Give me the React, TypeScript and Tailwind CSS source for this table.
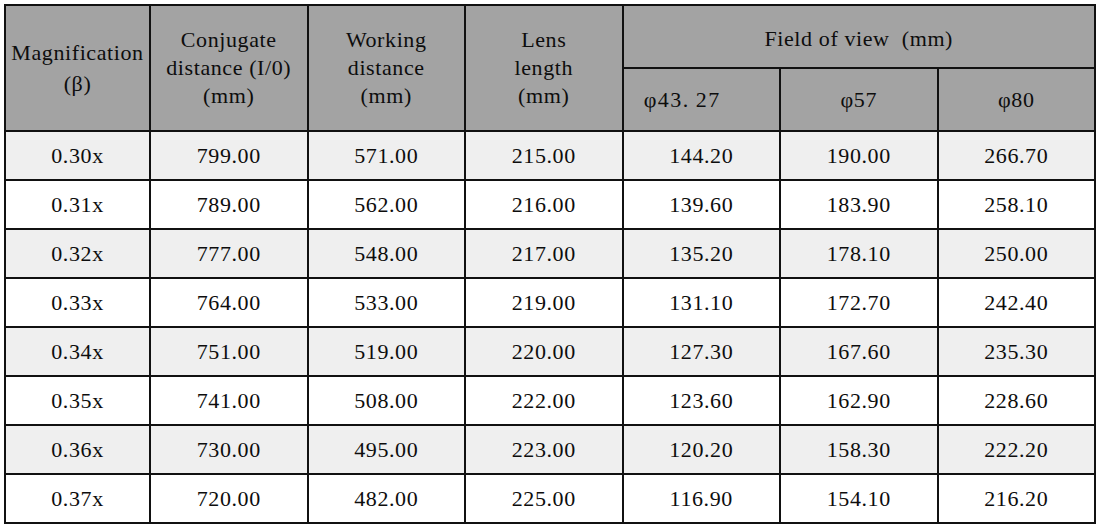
const rows: string[][] = [
  ["0.30x", "799.00", "571.00", "215.00", "144.20", "190.00", "266.70"],
  ["0.31x", "789.00", "562.00", "216.00", "139.60", "183.90", "258.10"],
  ["0.32x", "777.00", "548.00", "217.00", "135.20", "178.10", "250.00"],
  ["0.33x", "764.00", "533.00", "219.00", "131.10", "172.70", "242.40"],
  ["0.34x", "751.00", "519.00", "220.00", "127.30", "167.60", "235.30"],
  ["0.35x", "741.00", "508.00", "222.00", "123.60", "162.90", "228.60"],
  ["0.36x", "730.00", "495.00", "223.00", "120.20", "158.30", "222.20"],
  ["0.37x", "720.00", "482.00", "225.00", "116.90", "154.10", "216.20"],
];

const cell = "border-2 border-[#111] text-center align-middle p-0";

export default function App() {
  return (
    <div className="min-h-screen bg-white pt-[4px] pl-[4px] font-['Liberation_Serif',serif] text-[22px] tracking-[0.6px] text-[#0d0d0d]">
      <table className="w-[1092px] table-fixed border-collapse">
        <colgroup>
          <col className="w-[145px]" />
          <col />
          <col />
          <col />
          <col />
          <col />
          <col />
        </colgroup>
        <thead className="bg-[#a3a3a3]">
          <tr className="h-[63px]">
            <th rowSpan={2} className={`${cell} font-normal leading-[31px]`}>
              Magnification
              <br />
              (β)
            </th>
            <th rowSpan={2} className={`${cell} font-normal leading-[28px]`}>
              Conjugate
              <br />
              distance (I/0)
              <br />
              (mm)
            </th>
            <th rowSpan={2} className={`${cell} font-normal leading-[28px]`}>
              Working
              <br />
              distance
              <br />
              (mm)
            </th>
            <th rowSpan={2} className={`${cell} font-normal leading-[28px]`}>
              Lens
              <br />
              length
              <br />
              (mm)
            </th>
            <th colSpan={3} className={`${cell} font-normal pt-[3px]`}>
              Field of view&nbsp; (mm)
            </th>
          </tr>
          <tr className="h-[63px]">
            <th className={`${cell} font-normal pr-[38px] tracking-[1.5px]`}>
              φ43<span className="mr-[6px]">.</span>27
            </th>
            <th className={`${cell} font-normal`}>φ57</th>
            <th className={`${cell} font-normal`}>φ80</th>
          </tr>
        </thead>
        <tbody>
          {rows.map((r, i) => (
            <tr key={r[0]} className={`h-[49px] ${i % 2 === 0 ? "bg-[#efefef]" : "bg-white"}`}>
              {r.map((v, j) => (
                <td key={j} className={cell}>
                  {v}
                </td>
              ))}
            </tr>
          ))}
        </tbody>
      </table>
    </div>
  );
}
